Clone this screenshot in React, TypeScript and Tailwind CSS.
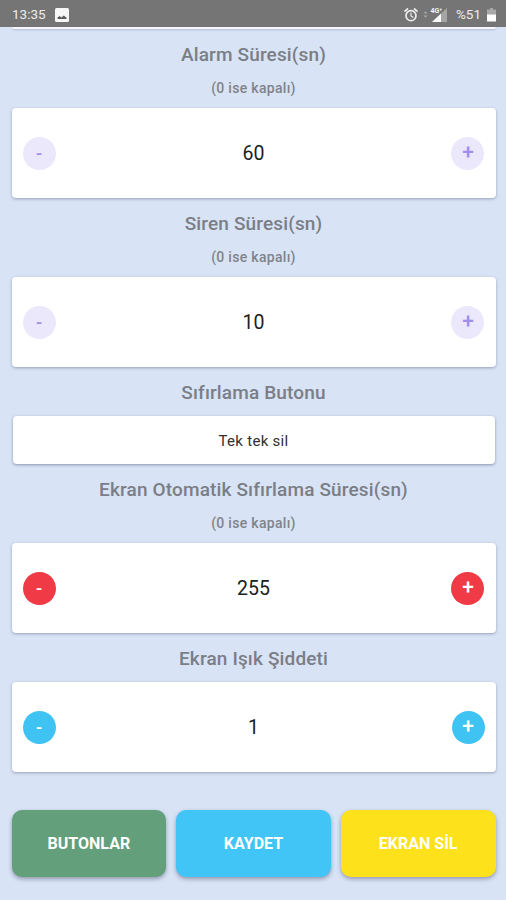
import React from 'react';

interface StepperProps {
  value: number;
  buttonClass: string;
}

const Stepper: React.FC<StepperProps> = ({ value, buttonClass }) => {
  const base = 'flex h-[33px] w-[33px] items-center justify-center rounded-full font-medium';
  return (
    <div className="flex h-[90px] items-center justify-between rounded-[4px] bg-white px-[11px] shadow-[0_1px_3px_rgba(60,70,110,0.42)]">
      <button className={`${base} ${buttonClass} pt-px text-lg`}>-</button>
      <span className="pt-px text-[19.5px] text-[#202020]">{value}</span>
      <button className={`${base} ${buttonClass} pb-px text-[21px]`}>+</button>
    </div>
  );
};

const Title: React.FC<{ children: React.ReactNode }> = ({ children }) => (
  <h2 className="text-center text-[19px] leading-[26px] font-medium tracking-[0.15px] text-[#7a7e86]">{children}</h2>
);

const Hint: React.FC = () => (
  <p className="mt-[10px] mb-[10px] text-center text-[14px] leading-[20px] font-medium tracking-[0.3px] text-[#7f838b]">
    (0 ise kapalı)
  </p>
);

const StatusBar: React.FC = () => (
  <div className="flex h-[27px] items-center justify-between bg-[#757575] pt-[2px] pr-[10px] pl-3 text-[13.5px] text-[#ececec]">
    <div className="flex items-center gap-[9px]">
      <span>13:35</span>
      <svg className="h-[14px] w-[14px]" viewBox="0 0 14 14">
        <rect width="14" height="14" rx="1.5" fill="#f7f7f7" />
        <path d="M2.5 11V9.6L4.7 8 6.4 9.4 8.8 7.6 11.5 9.8V11Z" fill="#5c5c5c" />
      </svg>
    </div>
    <div className="flex items-center">
      <svg className="h-[14px] w-[14px]" viewBox="0 0 14 14" fill="none" stroke="#ededed" strokeLinecap="round">
        <circle cx="7" cy="7.7" r="5" strokeWidth="1.7" />
        <path d="M7 5v3l2 1.2" strokeWidth="1.2" />
        <path d="M1 3.2 3.5 1M13 3.2 10.5 1" strokeWidth="1.7" />
      </svg>
      <svg className="ml-[5px] h-[9px] w-[5px]" viewBox="0 0 5 9" fill="#a8a8a8">
        <path d="M0.5 3.5 2.5 1.2 4.5 3.5ZM0.5 5.5 2.5 7.8 4.5 5.5Z" />
      </svg>
      <svg className="ml-[2px] h-[16px] w-[18px]" viewBox="0 0 18 16">
        <path d="M17 1V15H2Z" fill="#a5a5a5" />
        <path d="M11 6.6V15H2Z" fill="#fafafa" />
        <text x="0.5" y="5.8" fontSize="7" fontWeight="700" fill="#f2f2f2">4G⁺</text>
      </svg>
      <span className="ml-[8px]">%51</span>
      <svg className="ml-[6px] h-[14px] w-[9px]" viewBox="0 0 9 14">
        <path d="M3 0h3v1.6h3V7H0V1.6h3Z" fill="#a8a8a8" />
        <path d="M0 6.5h9V13.5H0Z" fill="#ffffff" />
      </svg>
    </div>
  </div>
);

const actions = [
  { label: 'BUTONLAR', color: 'bg-[#629f7a]' },
  { label: 'KAYDET', color: 'bg-[#40c5f6]' },
  { label: 'EKRAN SİL', color: 'bg-[#fde11a]' }
];

const disabled = 'bg-[#ece8fb] text-[#a08eea]';

export default function App() {
  return (
    <div className="h-[900px] w-[506px] overflow-hidden bg-[#d8e3f5] font-[Roboto,sans-serif]">
      <StatusBar />
      <div className="mr-[10.5px] ml-[11.5px]">
        {/* bottom edge of the card scrolled under the status bar */}
        <div className="h-[2px] rounded-b-[4px] bg-[#f5f7fb] shadow-[0_1px_2px_rgba(60,70,110,0.25)]" />

        <div className="pt-[13px]">
          <Title>Alarm Süresi(sn)</Title>
          <Hint />
          <Stepper value={60} buttonClass={disabled} />
        </div>

        <div className="pt-[13px]">
          <Title>Siren Süresi(sn)</Title>
          <Hint />
          <Stepper value={10} buttonClass={disabled} />
        </div>

        <div className="pt-[13px]">
          <Title>Sıfırlama Butonu</Title>
          <button className="mx-px mt-[10px] flex h-[48px] w-[482px] items-center justify-center rounded-[4px] bg-white pt-[2px] text-[15px] tracking-[0.3px] text-[#303030] shadow-[0_1px_3px_rgba(60,70,110,0.5)]">
            Tek tek sil
          </button>
        </div>

        <div className="pt-[13px]">
          <Title>Ekran Otomatik Sıfırlama Süresi(sn)</Title>
          <Hint />
          <Stepper value={255} buttonClass="bg-[#f03a45] text-white" />
        </div>

        <div className="pt-[13px]">
          <Title>Ekran Işık Şiddeti</Title>
          <div className="mt-[10px]">
            <Stepper value={1} buttonClass="bg-[#3fc3f3] text-white" />
          </div>
        </div>

        <div className="mt-[38px] flex gap-[10px]">
          {actions.map((action) => (
            <button
              key={action.label}
              className={`h-[67px] flex-1 rounded-[10px] pt-px text-[16px] font-bold text-white shadow-[0_2px_4px_rgba(60,60,90,0.45)] ${action.color}`}
            >
              {action.label}
            </button>
          ))}
        </div>
      </div>
    </div>
  );
}
